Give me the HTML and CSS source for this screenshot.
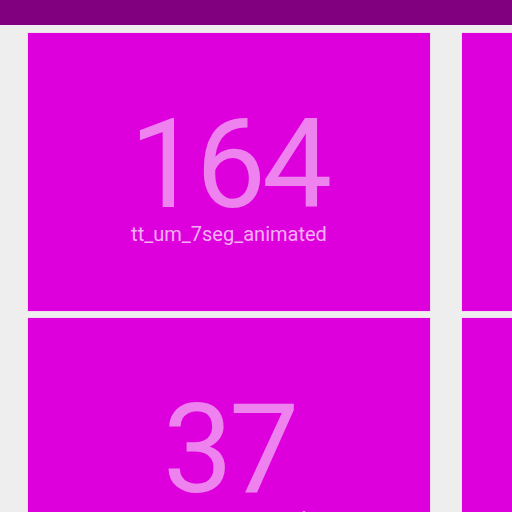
FILE: index.html
```html
<!DOCTYPE html>
<html>
<head>
<meta charset="utf-8">
<link rel="stylesheet" href="styles.css">
</head>
<body>
<header class="topbar"></header>
<main class="grid">
  <div class="card">
    <div class="count">164</div>
    <div class="name">tt_um_7seg_animated</div>
  </div>
  <div class="card">
    <div class="count">98</div>
    <div class="name">tt_um_example</div>
  </div>
  <div class="card">
    <div class="count">37</div>
    <div class="name">tt_um_vga_example</div>
  </div>
  <div class="card">
    <div class="count">21</div>
    <div class="name">tt_um_counter</div>
  </div>
</main>
</body>
</html>
```

FILE: styles.css
```css
html, body {
  margin: 0;
  padding: 0;
  background: #eeeeee;
  font-family: Roboto, "Noto Sans", sans-serif;
  overflow: hidden;
}
.topbar {
  height: 25px;
  background: #800080;
  border-bottom: 1px solid #f4eef4;
}
.grid {
  display: grid;
  grid-template-columns: 402px 402px;
  grid-auto-rows: 278px;
  column-gap: 32px;
  row-gap: 7px;
  padding: 7px 0 0 28px;
  width: 1000px;
}
.card {
  background: #dd00dd;
  box-shadow: 0 0 1px rgba(255, 120, 255, 0.8);
  display: flex;
  flex-direction: column;
  align-items: center;
  padding-top: 77px;
  box-sizing: border-box;
}
.count {
  font-size: 125px;
  line-height: 110px;
  letter-spacing: -4px;
  color: #ee82ee;
  font-weight: 400;
}
.name {
  margin-top: 2px;
  font-size: 20px;
  line-height: 24px;
  color: #f5b0f5;
}
```
